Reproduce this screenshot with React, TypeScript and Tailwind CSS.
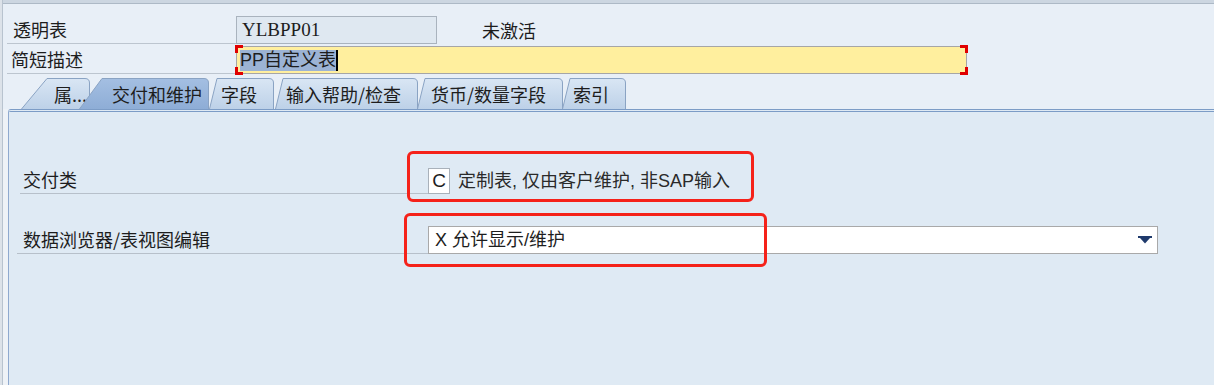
import React from 'react';

const CN = "font-['Noto_Sans_CJK_SC',sans-serif]";
const MIX = "font-['Liberation_Sans','Noto_Sans_CJK_SC',sans-serif]";

type TabDef = { label: string; w: number; slant: number; ml: number; pl: number; selected?: boolean };

const tabs: TabDef[] = [
  { label: '属...', w: 69, slant: 26, ml: 18, pl: 33 },
  { label: '交付和维护', w: 130, slant: 23, ml: -11, pl: 33, selected: true },
  { label: '字段', w: 65, slant: 8, ml: 0, pl: 12 },
  { label: '输入帮助/检查', w: 143, slant: 8, ml: 1, pl: 11 },
  { label: '货币/数量字段', w: 146, slant: 8, ml: -1, pl: 14 },
  { label: '索引', w: 64, slant: 8, ml: -1, pl: 11 },
];

function Tab({ t, idx }: { t: TabDef; idx: number }) {
  const h = 31;
  const w = t.w;
  const d = `M0.5,${h} L${t.slant},0.5 L${w - 5},0.5 Q${w - 0.5},0.5 ${w - 0.5},5 L${w - 0.5},${h}`;
  return (
    <div
      className={`relative h-[31px] shrink-0 ${t.selected ? 'z-10' : ''}`}
      style={{ width: w, marginLeft: t.ml }}
    >
      <svg width={w} height={h} className="absolute inset-0" aria-hidden="true">
        <defs>
          <linearGradient id={`tg${idx}`} x1="0" y1="0" x2="0" y2="1">
            {t.selected ? (
              <>
                <stop offset="0" stopColor="#a4bfe2" />
                <stop offset="1" stopColor="#8eadd6" />
              </>
            ) : (
              <>
                <stop offset="0" stopColor="#d9e6f4" />
                <stop offset="1" stopColor="#bdd1e8" />
              </>
            )}
          </linearGradient>
        </defs>
        <path d={d} fill={`url(#tg${idx})`} stroke="#8aa3c3" strokeWidth="1" />
      </svg>
      <div
        className={`relative pt-[3px] text-[18px] leading-[26px] text-[#1d1d1d] whitespace-nowrap ${CN}`}
        style={{ paddingLeft: t.pl }}
      >
        {t.label}
      </div>
    </div>
  );
}

function Bracket({ side }: { side: 'tl' | 'bl' | 'tr' | 'br' }) {
  const cls = {
    tl: '-left-[2px] -top-[2px] border-l-[3px] border-t-[3px]',
    bl: '-left-[2px] -bottom-[2px] border-l-[3px] border-b-[3px]',
    tr: '-right-[2px] -top-[2px] border-r-[3px] border-t-[3px]',
    br: '-right-[2px] -bottom-[2px] border-r-[3px] border-b-[3px]',
  }[side];
  return <div className={`absolute w-[8px] h-[8px] border-[#e00000] ${cls}`} />;
}

export default function App() {
  return (
    <div className="relative w-[1214px] h-[385px] overflow-hidden flex bg-[#e8eff7] text-[#1d1d1d]">
      {/* left frame edge */}
      <div className="w-[3px] h-full bg-[#dce2e9] border-r border-[#b8c3cf] shrink-0" />

      <div className="flex-1 flex flex-col min-w-0">
        {/* top strip */}
        <div className="h-[4px] bg-[#ccd6e1] border-b border-[#adb9c6] shrink-0" />

        {/* header rows */}
        <div className="mt-[12px] flex items-center h-[28px]">
          <div className={`ml-[4px] w-[229px] h-full border-b border-[#bcc5cf] pl-[6px] pt-[2px] text-[18px] leading-[23px] ${CN}`}>
            透明表
          </div>
          <div className="w-[201px] h-full bg-[#dfe8f1] border border-[#a9b3be] pl-[5px] text-[19px] leading-[26px] font-['Liberation_Serif',serif]">
            YLBPP01
          </div>
          <div className={`ml-[45px] text-[18px] leading-[26px] ${CN}`}>未激活</div>
        </div>

        <div className="mt-[2px] flex items-center h-[28px]">
          <div className={`ml-[4px] w-[229px] h-full border-b border-[#bcc5cf] pl-[4px] pt-[2px] text-[18px] leading-[23px] ${CN}`}>
            简短描述
          </div>
          <div className="relative w-[731px] h-full bg-[#ffef9e] border border-[#a6a6a6]">
            <Bracket side="tl" />
            <Bracket side="bl" />
            <Bracket side="tr" />
            <Bracket side="br" />
            <div className="flex items-center h-full pl-[3px]">
              <span className={`bg-[#9cb3d4] text-[18px] leading-[21px] ${MIX}`}>PP自定义表</span>
              <span className="w-[2px] h-[21px] bg-black" />
            </div>
          </div>
        </div>

        {/* tab strip */}
        <div className="mt-[4px] flex items-end h-[31px]">
          {tabs.map((t, i) => (
            <Tab key={t.label} t={t} idx={i} />
          ))}
        </div>

        {/* tab panel */}
        <div className="flex-1 flex bg-[#eef2f7]">
          <div className="ml-[5px] flex-1 bg-[#dfeaf4] border-l border-t-[3px] border-double border-l-[#8fa9cf] border-t-[#7c9cc6] rounded-tl-[3px]">
            <div className="mt-[55px] flex items-center h-[27px]">
              <div className={`ml-[11px] w-[408px] h-full border-b border-[#b7c0ca] pl-[3px] pt-[1px] text-[18px] leading-[23px] ${CN}`}>
                交付类
              </div>
              <div className="w-[22px] h-[26px] bg-white border border-[#a9b1ba] text-center text-[19px] leading-[24px] font-['Liberation_Sans',sans-serif]">
                C
              </div>
              <div className={`ml-[8px] text-[18px] leading-[24px] text-[#2a2a2a] ${MIX}`}>
                定制表, 仅由客户维护, 非SAP输入
              </div>
            </div>

            <div className="mt-[32px] flex items-center h-[28px]">
              <div className={`ml-[8px] w-[411px] h-full border-b border-[#b7c0ca] pl-[6px] pt-[2px] text-[18px] leading-[23px] ${CN}`}>
                数据浏览器/表视图编辑
              </div>
              <div className="relative w-[730px] h-full bg-white border border-[#a9a9a9] pl-[6px] flex items-center">
                <span className={`text-[18px] leading-[24px] ${MIX}`}>X 允许显示/维护</span>
                <svg width="14" height="8" viewBox="0 0 14 8" className="absolute right-[5px] top-[9px]" aria-hidden="true">
                  <rect x="0" y="0" width="14" height="2" fill="#1f3a6c" />
                  <path d="M2,2 L12,2 L7,7.5 Z" fill="#1f3a6c" />
                </svg>
              </div>
            </div>
          </div>
        </div>
      </div>

      {/* red annotation boxes */}
      <div className="absolute left-[407px] top-[151px] w-[347px] h-[51px] border-[3px] border-[#f5221a] rounded-[6px]" />
      <div className="absolute left-[404px] top-[213px] w-[363px] h-[54px] border-[3px] border-[#f5221a] rounded-[6px]" />
    </div>
  );
}
